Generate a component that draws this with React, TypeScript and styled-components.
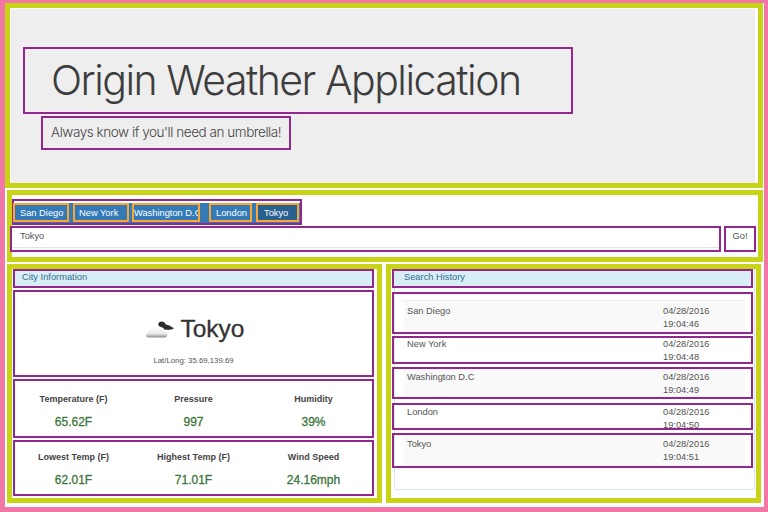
import styled, { createGlobalStyle } from "styled-components";

const GlobalStyle = createGlobalStyle`
  html, body { margin: 0; padding: 0; background: #fff; }
  * { box-sizing: border-box; }
  body { font-family: "Liberation Sans", Arial, sans-serif; color: #333; }
`;

const cities = [
  { name: "San Diego", width: 56, gap: 4, pad: 5 },
  { name: "New York", width: 56, gap: 3, pad: 4 },
  { name: "Washington D.C", width: 68, gap: 9, pad: 0 },
  { name: "London", width: 43, gap: 4, pad: 5 },
  { name: "Tokyo", width: 43, gap: 0, pad: 6 },
];

const firstStats = [
  { label: "Temperature (F)", value: "65.62F" },
  { label: "Pressure", value: "997" },
  { label: "Humidity", value: "39%" },
];

const secondStats = [
  { label: "Lowest Temp (F)", value: "62.01F" },
  { label: "Highest Temp (F)", value: "71.01F" },
  { label: "Wind Speed", value: "24.16mph" },
];

const history = [
  { city: "San Diego", time: "19:04:46", height: 42, gap: 4, inset: 6, textTop: 3.5 },
  { city: "New York", time: "19:04:48", height: 28, gap: 2, inset: 0, textTop: 0 },
  { city: "Washington D.C", time: "19:04:49", height: 32, gap: 3, inset: 0, textTop: 1.5 },
  { city: "London", time: "19:04:50", height: 27, gap: 4, inset: 0, textTop: 0.5 },
  { city: "Tokyo", time: "19:04:51", height: 35, gap: 3, inset: 0, textTop: 2.5 },
];

const CloudIcon = () => (
  <svg width="28" height="17" viewBox="0 0 28 17" aria-hidden="true">
    <defs>
      <linearGradient id="cloudFill" x1="0" y1="0" x2="0" y2="1">
        <stop offset="0" stopColor="#ffffff" />
        <stop offset="0.65" stopColor="#e8e8e8" />
        <stop offset="1" stopColor="#8a8a8a" />
      </linearGradient>
    </defs>
    <path
      d="M12 3.500C12.500 1 15 0 17 .8c1.500.6 2.500 2 3.200 3 1.500 0 3 .6 4.300 1.400 1.200.7 2.500 1.400 3.500 2-1.500 1-3.500 1.600-5.500 1.600H16z"
      fill="#2e2e2e"
    />
    <path
      d="M2.500 16.500C1 16.500 0 15.300 0 14c0-1.500 1-2.700 2.500-3C3 8.500 5 7 7.500 7c1 0 2 .3 2.700.8C11.200 6 13 5.500 15 6c2.500.7 4 2.500 4.500 5 1.300.3 2 1.500 2 2.800 0 1.500-1.200 2.700-2.700 2.700z"
      fill="url(#cloudFill)"
    />
  </svg>
);

export default function App() {
  return (
    <>
      <GlobalStyle />
      <Page>
        <HeaderBand>
          <Jumbotron>
            <Title>Origin Weather Application</Title>
            <Tagline>Always know if you'll need an umbrella!</Tagline>
          </Jumbotron>
        </HeaderBand>

        <SearchBand>
          <Tabs>
            <TabStrip>
              {cities.map((city) => (
                <CityButton
                  key={city.name}
                  $active={city.name === "Tokyo"}
                  $width={city.width}
                  $gap={city.gap}
                  $pad={city.pad}
                >
                  {city.name}
                </CityButton>
              ))}
            </TabStrip>
          </Tabs>
          <SearchRow>
            <SearchBox>
              <SearchField>Tokyo</SearchField>
            </SearchBox>
            <GoButton>Go!</GoButton>
          </SearchRow>
        </SearchBand>

        <Columns>
          <CityPanel>
            <PanelHeading>City Information</PanelHeading>
            <CityHero>
              <CityName>
                <CloudIcon />
                Tokyo
              </CityName>
              <LatLong>Lat/Long: 35.69,139.69</LatLong>
            </CityHero>
            <StatBox $height={59} $top={12}>
              {firstStats.map((stat) => (
                <Stat key={stat.label}>
                  <StatLabel>{stat.label}</StatLabel>
                  <StatValue>{stat.value}</StatValue>
                </Stat>
              ))}
            </StatBox>
            <StatBox $height={56} $top={9}>
              {secondStats.map((stat) => (
                <Stat key={stat.label}>
                  <StatLabel>{stat.label}</StatLabel>
                  <StatValue>{stat.value}</StatValue>
                </Stat>
              ))}
            </StatBox>
          </CityPanel>

          <HistoryPanel>
            <HistoryFrame>
              <HistoryHeading>Search History</HistoryHeading>
              <HistoryList>
                {history.map((row, index) => (
                  <HistoryRow key={row.time} $height={row.height} $gap={row.gap} $inset={row.inset}>
                    <RowStripe $striped={index % 2 === 0} $first={index === 0} $textTop={row.textTop}>
                      <RowCity>{row.city}</RowCity>
                      <RowDate>
                        04/28/2016
                        <br />
                        {row.time}
                      </RowDate>
                    </RowStripe>
                  </HistoryRow>
                ))}
              </HistoryList>
            </HistoryFrame>
          </HistoryPanel>
        </Columns>
      </Page>
    </>
  );
}

const Page = styled.div`
  width: 768px;
  height: 512px;
  overflow: hidden;
  background: #fff;
  border-style: solid;
  border-color: #f178a6;
  border-width: 3px 4px 5px 5px;
`;

const HeaderBand = styled.header`
  height: 185px;
  margin-right: 1px;
  border: 5px solid #c8d316;
  background: #fff;
  padding: 1px 3px 0 1px;
`;

const Jumbotron = styled.div`
  height: 100%;
  background: #eee;
  padding: 38px 0 0 12px;
`;

const Title = styled.h1`
  width: 550px;
  height: 67px;
  margin: 0;
  padding: 6px 0 0 26px;
  border: 2px solid #92278f;
  font-family: Inter, "Liberation Sans", Arial, sans-serif;
  font-size: 41px;
  line-height: 50px;
  font-weight: 300;
  letter-spacing: -1.500px;
  white-space: nowrap;
  color: #3d3d3d;
`;

const Tagline = styled.p`
  width: 250px;
  height: 34px;
  margin: 2px 0 0 18px;
  padding-left: 8px;
  border: 2px solid #92278f;
  font-family: Inter, "Liberation Sans", Arial, sans-serif;
  font-size: 13.500px;
  line-height: 29px;
  font-weight: 300;
  letter-spacing: -0.450px;
  white-space: nowrap;
  color: #444;
`;

const SearchBand = styled.section`
  height: 72px;
  margin: 2px 1px 0 2px;
  border: 5px solid #c8d316;
  padding-top: 4px;
  background: #fff;
`;

const Tabs = styled.div`
  width: 290px;
  height: 26px;
  padding-top: 2px;
  border: 2px solid #92278f;
  background: #fff;
`;

const TabStrip = styled.div`
  display: flex;
  height: 20px;
  margin-left: -1px;
  background: #337ab7;
`;

const CityButton = styled.div<{ $active: boolean; $width: number; $gap: number; $pad: number }>`
  flex: none;
  width: ${(p) => p.$width}px;
  height: 19px;
  margin-right: ${(p) => p.$gap}px;
  padding-left: ${(p) => p.$pad}px;
  overflow: hidden;
  white-space: nowrap;
  border: 2px solid #f9a732;
  background: ${(p) => (p.$active ? "#286090" : "#337ab7")};
  color: #fff;
  font-size: 9.300px;
  line-height: 17px;
`;

const SearchRow = styled.div`
  display: flex;
  height: 26px;
  margin: 1px 0 0 -2px;
  gap: 3px;
`;

const SearchBox = styled.div`
  width: 711px;
  border: 2px solid #92278f;
  background: #fff;
`;

const SearchField = styled.div`
  height: 20px;
  margin-left: 1px;
  padding: 2px 0 0 7px;
  border-bottom: 1px solid #e2e2e2;
  color: #555;
  font-size: 9.300px;
  line-height: 13px;
`;

const GoButton = styled.div`
  width: 32px;
  padding-top: 2px;
  border: 2px solid #92278f;
  background: #fff;
  color: #555;
  font-size: 9.300px;
  line-height: 13px;
  text-align: center;
`;

const Columns = styled.div`
  display: flex;
  height: 239px;
  margin: 2px 0 0 2px;
  gap: 4px;
`;

const CityPanel = styled.section`
  width: 375px;
  border: 5px solid #c8d316;
  padding: 0 3px 0 1px;
  display: flex;
  flex-direction: column;
`;

const PanelHeading = styled.h3`
  flex: none;
  height: 19px;
  margin: 0;
  padding: 0 0 0 7px;
  border: 2px solid #92278f;
  background: #d9edf7;
  color: #31708f;
  font-size: 9.300px;
  line-height: 12px;
  font-weight: 400;
`;

const CityHero = styled.div`
  height: 87px;
  margin-top: 2px;
  border: 2px solid #92278f;
  text-align: center;
`;

const CityName = styled.div`
  display: flex;
  align-items: center;
  justify-content: center;
  gap: 6px;
  margin-top: 24px;
  padding-left: 4px;
  height: 26px;
  font-size: 24.500px;
  line-height: 26px;
  color: #333;
  -webkit-text-stroke: 0.3px #333;
`;

const LatLong = styled.div`
  margin-top: 13px;
  font-size: 7.800px;
  line-height: 12px;
  color: #555;
`;

const StatBox = styled.div<{ $height: number; $top: number }>`
  display: grid;
  grid-template-columns: repeat(3, 120px);
  height: ${(p) => p.$height}px;
  margin-top: 2px;
  padding-top: ${(p) => p.$top}px;
  border: 2px solid #92278f;
`;

const Stat = styled.div`
  margin-left: -3px;
  text-align: center;
`;

const StatLabel = styled.div`
  font-size: 9px;
  line-height: 13px;
  font-weight: 700;
  color: #444;
`;

const StatValue = styled.div`
  margin-top: 8px;
  font-size: 12px;
  line-height: 16px;
  color: #3c763d;
  -webkit-text-stroke: 0.3px #3c763d;
`;

const HistoryPanel = styled.section`
  width: 375px;
  border: 5px solid #c8d316;
`;

const HistoryFrame = styled.div`
  height: 221px;
  margin: 0 0 0 3px;
  width: 361px;
  border: 1px solid #d6e9f2;
  border-top: 0;
  border-radius: 0 0 3px 3px;
`;

const HistoryHeading = styled(PanelHeading)`
  margin-left: -3px;
  width: 361px;
  padding-left: 10px;
`;

const HistoryList = styled.div`
  display: flex;
  flex-direction: column;
  margin-left: -3px;
  width: 361px;
`;

const HistoryRow = styled.div<{ $height: number; $gap: number; $inset: number }>`
  flex: none;
  height: ${(p) => p.$height}px;
  margin-top: ${(p) => p.$gap}px;
  padding-top: ${(p) => p.$inset}px;
  border: 2px solid #92278f;
`;

const RowStripe = styled.div<{ $striped: boolean; $first: boolean; $textTop: number }>`
  display: flex;
  width: 341px;
  height: 100%;
  margin-left: 10px;
  padding: ${(p) => p.$textTop}px 0 0 3px;
  border-top: ${(p) => (p.$first ? "1px solid #eee" : "0")};
  background: ${(p) => (p.$striped ? "#f9f9f9" : "transparent")};
  color: #555;
  font-size: 9.300px;
  line-height: 13.300px;
`;

const RowCity = styled.div`
  width: 256px;
`;

const RowDate = styled.div`
  white-space: nowrap;
`;
